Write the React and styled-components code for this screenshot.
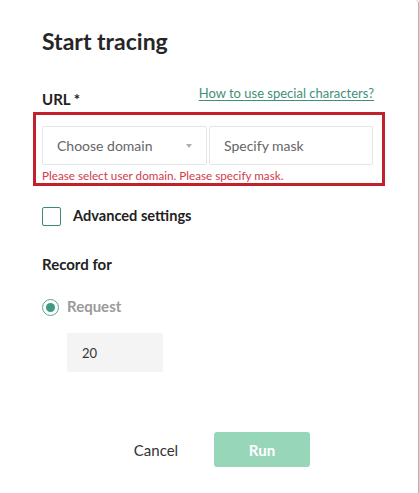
import React from "react";
import styled, { createGlobalStyle } from "styled-components";

const Global = createGlobalStyle`
  html, body { margin: 0; padding: 0; background: #fff; }
  body { font-family: Lato, "Open Sans", sans-serif; color: #222; }
  * { box-sizing: border-box; }
`;

const Dialog = styled.div`
  width: 419px;
  min-height: 493px;
  padding: 27px 45px 0 42px;
  background: #fff;
  border-right: 1px solid #b3b3b3;
  border-top-right-radius: 4px;
  display: flex;
  flex-direction: column;
`;

const Title = styled.h1`
  margin: 0;
  font-size: 23px;
  line-height: 28px;
  font-weight: 700;
  color: #262626;
`;

const LabelRow = styled.div`
  margin-top: 29px;
  display: flex;
  justify-content: space-between;
  align-items: flex-start;
`;

const Label = styled.div`
  font-size: ${(p) => p.$size || 15}px;
  line-height: 20px;
  font-weight: 700;
  color: #222;
  padding-top: ${(p) => p.$offset || 0}px;
  margin-top: ${(p) => p.$gap || 0}px;
`;

const HelpLink = styled.a`
  font-size: 13px;
  line-height: 18px;
  color: #3f8f7c;
  text-decoration: underline;
  text-underline-offset: 2px;
  cursor: pointer;
  margin-right: -1px;
`;

const Highlight = styled.div`
  margin: 3px -12px 0 -9px;
  border: 3px solid #c2212b;
  padding: 11px 9px 0 6px;
`;

const InputGroup = styled.div`
  display: grid;
  grid-template-columns: 165px 1fr;
  gap: 2px;
`;

const Field = styled.div`
  height: 39px;
  border: 1px solid #e6e6e6;
  border-radius: 2px;
  display: flex;
  align-items: center;
  justify-content: space-between;
  padding: 0 14px 0 14px;
  font-size: 14px;
  color: #666;
  background: #fff;
`;

const Caret = styled.span`
  width: 0;
  height: 0;
  border-left: 3.5px solid transparent;
  border-right: 3.5px solid transparent;
  border-top: 4px solid #b0b0b0;
`;

const ErrorText = styled.div`
  margin-top: 2px;
  font-size: 11.7px;
  line-height: 16px;
  color: #d23a4b;
`;

const CheckRow = styled.label`
  margin-top: 20px;
  display: flex;
  align-items: center;
  gap: 12px;
`;

const CheckBox = styled.span`
  width: 19px;
  height: 19px;
  border: 1.5px solid #3e8a7a;
  border-radius: 2px;
  background: #fff;
`;

const RadioRow = styled.div`
  margin-top: 22px;
  display: flex;
  align-items: center;
  gap: 8px;
`;

const Radio = styled.span`
  width: 17px;
  height: 17px;
  border-radius: 50%;
  border: 1.5px solid #5aa492;
  display: flex;
  align-items: center;
  justify-content: center;
  margin-top: 2px;
  &::after {
    content: "";
    width: 9px;
    height: 9px;
    border-radius: 50%;
    background: #3d9a82;
  }
`;

const RadioLabel = styled.span`
  font-size: 15px;
  line-height: 20px;
  font-weight: 700;
  color: #9a9a9a;
`;

const NumberBox = styled.div`
  margin: 17px 0 0 25px;
  width: 96px;
  height: 39px;
  background: #f4f4f4;
  border-radius: 1px;
  display: flex;
  align-items: center;
  padding-left: 15px;
  font-size: 13px;
  color: #333;
`;

const Footer = styled.div`
  margin: 60px 0 0 -42px;
  width: 418px;
  display: flex;
  justify-content: center;
  gap: 10px;
`;

const Button = styled.button`
  width: 96px;
  height: 35px;
  border: none;
  border-radius: 3px;
  font-family: inherit;
  font-size: 15px;
  line-height: 20px;
  font-weight: ${(p) => (p.$primary ? 700 : 400)};
  color: ${(p) => (p.$primary ? "#fff" : "#333")};
  background: ${(p) => (p.$primary ? "#97d6b9" : "transparent")};
  padding: 0;
  cursor: pointer;
`;

export default function App() {
  return (
    <>
      <Global />
      <Dialog>
        <Title>Start tracing</Title>
        <LabelRow>
          <Label $offset={5}>URL *</Label>
          <HelpLink>How to use special characters?</HelpLink>
        </LabelRow>
        <Highlight>
          <InputGroup>
            <Field>
              Choose domain
              <Caret />
            </Field>
            <Field>Specify mask</Field>
          </InputGroup>
          <ErrorText>Please select user domain. Please specify mask.</ErrorText>
        </Highlight>
        <CheckRow>
          <CheckBox />
          <Label $size={14.6}>Advanced settings</Label>
        </CheckRow>
        <Label $gap={28}>Record for</Label>
        <RadioRow>
          <Radio />
          <RadioLabel>Request</RadioLabel>
        </RadioRow>
        <NumberBox>20</NumberBox>
        <Footer>
          <Button>Cancel</Button>
          <Button $primary>Run</Button>
        </Footer>
      </Dialog>
    </>
  );
}
